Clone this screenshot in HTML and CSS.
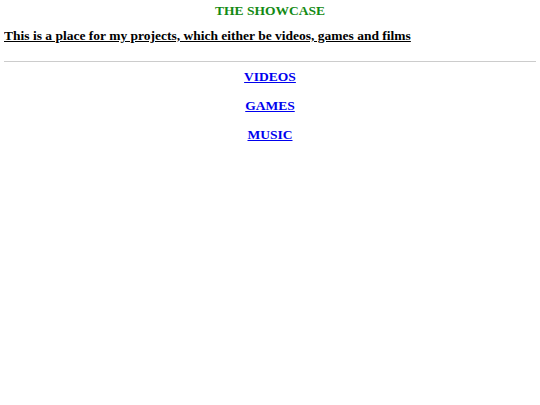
FILE: index.html
```html
<!DOCTYPE html>
<html>
<head>
<meta charset="utf-8">
<link rel="stylesheet" href="styles.css">
</head>
<body>
<h1 class="title">THE SHOWCASE</h1>
<h2 class="intro">This is a place for my projects, which either be videos, games and films</h2>
<hr class="rule">
<nav class="links">
<a class="link" href="#">VIDEOS</a>
<a class="link" href="#">GAMES</a>
<a class="link" href="#">MUSIC</a>
</nav>
</body>
</html>
```
FILE: styles.css
```css
body {
  margin: 0 4px;
  font-family: "Liberation Serif", "Times New Roman", serif;
  background: #fff;
}
.title {
  margin: 3px 0 0;
  font-size: 13.5px;
  line-height: 16px;
  text-align: center;
  color: #138a13;
}
.intro {
  margin: 9px 0 0;
  font-size: 13.5px;
  line-height: 16px;
  text-decoration: underline;
  color: #000;
}
.rule {
  margin: 17px 0 0;
  border: 0;
  border-top: 1px solid #ccc;
  height: 0;
}
.links {
  display: flex;
  flex-direction: column;
  align-items: center;
  gap: 13px;
  margin-top: 7px;
}
.link {
  font-size: 13.5px;
  line-height: 16px;
  font-weight: bold;
  color: #0000ee;
  text-decoration: underline;
}
```
